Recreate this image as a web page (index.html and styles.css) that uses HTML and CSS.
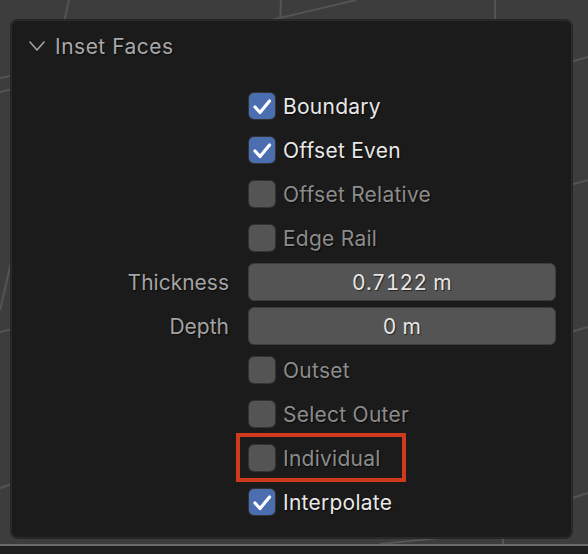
FILE: index.html
```html
<!DOCTYPE html>
<html lang="en">
<head>
<meta charset="utf-8">
<title>Inset Faces</title>
<link rel="stylesheet" href="styles.css">
</head>
<body>
<div class="screen">
  <div class="viewport">
    <svg class="grid" width="588" height="544" viewBox="0 0 588 544">
      <g stroke="#545454" stroke-width="2" fill="none">
        <line x1="69" y1="0" x2="60" y2="40"/>
        <line x1="281" y1="0" x2="280" y2="24"/>
        <line x1="250" y1="25" x2="356" y2="0"/>
        <line x1="495" y1="0" x2="495" y2="24"/>
        <line x1="560" y1="65" x2="588" y2="57"/>
        <line x1="560" y1="188" x2="588" y2="180"/>
        <line x1="560" y1="335" x2="588" y2="327"/>
        <line x1="560" y1="502" x2="588" y2="493"/>
        <line x1="0" y1="78" x2="20" y2="74"/>
        <line x1="0" y1="92" x2="20" y2="87"/>
        <line x1="0" y1="310" x2="14" y2="250"/>
        <line x1="0" y1="332" x2="20" y2="327"/>
        <line x1="0" y1="488" x2="20" y2="481"/>
        <line x1="380" y1="544" x2="440" y2="538"/>
        <line x1="503" y1="530" x2="503" y2="544"/>
      </g>
    </svg>
    <section class="panel">
      <header class="panel-header">
        <svg class="chevron" width="16" height="10" viewBox="0 0 16 10">
          <polyline points="1,1 8,9 15,1" fill="none" stroke="#a3a3a3" stroke-width="1.6" stroke-linecap="round" stroke-linejoin="round"/>
        </svg>
        <span class="title">Inset Faces</span>
      </header>
      <div class="props">
        <span class="label"></span>
        <div class="check on"><span class="box"><svg width="26" height="26" viewBox="0 0 26 26"><polyline points="6,14 11,19.5 20.5,8" fill="none" stroke="#fff" stroke-width="3.2" stroke-linecap="round" stroke-linejoin="round"/></svg></span><span class="text">Boundary</span></div>

        <span class="label"></span>
        <div class="check on"><span class="box"><svg width="26" height="26" viewBox="0 0 26 26"><polyline points="6,14 11,19.5 20.5,8" fill="none" stroke="#fff" stroke-width="3.2" stroke-linecap="round" stroke-linejoin="round"/></svg></span><span class="text">Offset Even</span></div>

        <span class="label"></span>
        <div class="check"><span class="box"></span><span class="text">Offset Relative</span></div>

        <span class="label"></span>
        <div class="check"><span class="box"></span><span class="text">Edge Rail</span></div>

        <span class="label">Thickness</span>
        <div class="field">0.7122 m</div>

        <span class="label">Depth</span>
        <div class="field">0 m</div>

        <span class="label"></span>
        <div class="check"><span class="box"></span><span class="text">Outset</span></div>

        <span class="label"></span>
        <div class="check"><span class="box"></span><span class="text">Select Outer</span></div>

        <span class="label"></span>
        <div class="check"><span class="box"></span><span class="text">Individual</span></div>

        <span class="label"></span>
        <div class="check on"><span class="box"><svg width="26" height="26" viewBox="0 0 26 26"><polyline points="6,14 11,19.5 20.5,8" fill="none" stroke="#fff" stroke-width="3.2" stroke-linecap="round" stroke-linejoin="round"/></svg></span><span class="text">Interpolate</span></div>
      </div>
      <div class="highlight"></div>
    </section>
  </div>
  <div class="statusbar"></div>
</div>
</body>
</html>
```
FILE: styles.css
```css
* { box-sizing: border-box; }
html, body {
  margin: 0;
  padding: 0;
  background: #3d3d3d;
}
body {
  font-family: "Inter", "Noto Sans", "DejaVu Sans", sans-serif;
  font-size: 21px;
  letter-spacing: 0.25px;
}
.screen {
  width: 588px;
  height: 554px;
  display: flex;
  flex-direction: column;
  overflow: hidden;
}
.viewport {
  position: relative;
  height: 544px;
  background: #3d3d3d;
  padding: 20px 0 0 11px;
}
.grid {
  position: absolute;
  left: 0;
  top: 0;
}
.statusbar {
  flex: 1;
  background: #1e1e1e;
  border-top: 2px solid #6a6a6a;
}
.panel {
  position: relative;
  width: 561px;
  height: 518px;
  background: #1b1b1b;
  border: 1px solid #2b2b2b;
  border-radius: 7px;
  box-shadow: 0 0 0 1px #262626;
}
.panel-header {
  height: 50px;
  display: flex;
  align-items: center;
  padding-left: 17px;
}
.chevron {
  margin-right: 10px;
  flex: none;
}
.title {
  color: #a8a8a8;
  letter-spacing: 0.5px;
  text-shadow: 1px 1px 1px rgba(0,0,0,0.7);
}
.props {
  margin-top: 13px;
  display: grid;
  grid-template-columns: 217px 308px;
  column-gap: 19px;
  grid-auto-rows: 44px;
  align-items: center;
}
.label {
  text-align: right;
  color: #a3a3a3;
  letter-spacing: 0;
  text-shadow: 1px 1px 1px rgba(0,0,0,0.7);
}
.check {
  display: flex;
  align-items: center;
  gap: 8px;
  padding-left: 1px;
}
.box {
  width: 26px;
  height: 26px;
  border-radius: 5px;
  background: #545454;
  box-shadow: 0 0 0 1px #333;
  flex: none;
  display: block;
}
.box svg { display: block; }
.check.on .box {
  background: #4b6eb0;
}
.text {
  color: #8c8c8c;
  text-shadow: 1px 1px 1px rgba(0,0,0,0.7);
}
.check.on .text {
  color: #e8e8e8;
}
.field {
  height: 38px;
  border-radius: 6px;
  background: #545454;
  border: 1px solid #3c3c3c;
  display: flex;
  align-items: center;
  justify-content: center;
  color: #e6e6e6;
  font-variant-numeric: tabular-nums;
  text-shadow: 1px 1px 1px rgba(0,0,0,0.6);
}
.highlight {
  position: absolute;
  left: 224px;
  top: 412px;
  width: 170px;
  height: 49px;
  border: 4px solid #cf3a1f;
}
```
